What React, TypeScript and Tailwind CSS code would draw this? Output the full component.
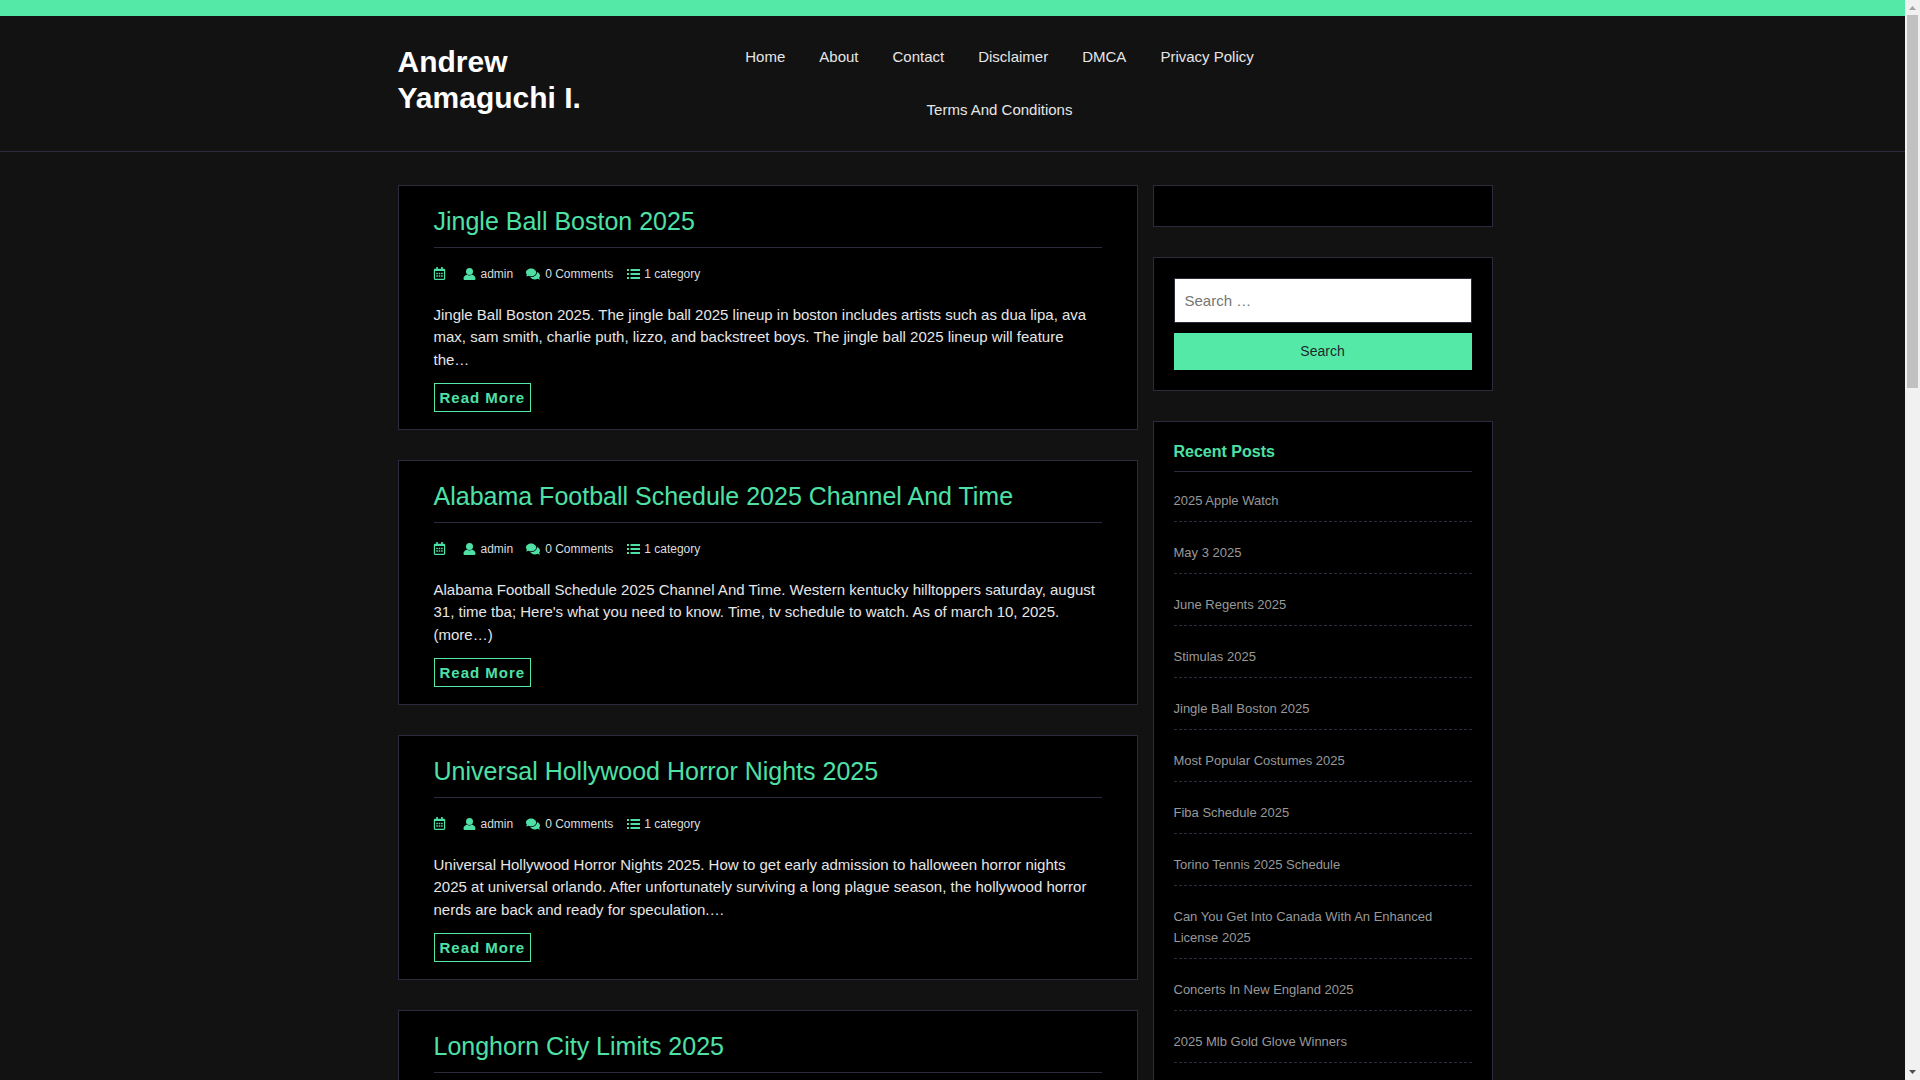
import React from "react";
import { FaRegCalendarAlt, FaComments } from "react-icons/fa";

const navItems = ["Home", "About", "Contact", "Disclaimer", "DMCA", "Privacy Policy", "Terms And Conditions"];

const posts = [
  {
    title: "Jingle Ball Boston 2025",
    excerpt:
      "Jingle Ball Boston 2025. The jingle ball 2025 lineup in boston includes artists such as dua lipa, ava max, sam smith, charlie puth, lizzo, and backstreet boys. The jingle ball 2025 lineup will feature the…",
  },
  {
    title: "Alabama Football Schedule 2025 Channel And Time",
    excerpt:
      "Alabama Football Schedule 2025 Channel And Time. Western kentucky hilltoppers saturday, august 31, time tba; Here's what you need to know. Time, tv schedule to watch. As of march 10, 2025. (more…)",
  },
  {
    title: "Universal Hollywood Horror Nights 2025",
    excerpt:
      "Universal Hollywood Horror Nights 2025. How to get early admission to halloween horror nights 2025 at universal orlando. After unfortunately surviving a long plague season, the hollywood horror nerds are back and ready for speculation.…",
  },
  { title: "Longhorn City Limits 2025", excerpt: "" },
];

const recentPosts = [
  "2025 Apple Watch",
  "May 3 2025",
  "June Regents 2025",
  "Stimulas 2025",
  "Jingle Ball Boston 2025",
  "Most Popular Costumes 2025",
  "Fiba Schedule 2025",
  "Torino Tennis 2025 Schedule",
  "Can You Get Into Canada With An Enhanced License 2025",
  "Concerts In New England 2025",
  "2025 Mlb Gold Glove Winners",
];

function UserIcon() {
  return (
    <svg viewBox="0 0 13 12" className="mr-[5px] h-[12px] w-[13px] fill-[#4fe0a6]">
      <circle cx="6.5" cy="3.5" r="3.5" />
      <path d="M0.5 10.5C0.5 8.4 2.4 7 4.2 6.8 5.5 7.6 7.5 7.6 8.8 6.8 10.6 7 12.5 8.4 12.5 10.5 12.5 11.5 11.8 12 11 12H2C1.2 12 0.5 11.5 0.5 10.5Z" />
    </svg>
  );
}

function ListIcon() {
  return (
    <svg viewBox="0 0 13 10" className="mr-[4px] h-[10px] w-[13px] fill-[#4fe0a6]">
      <path d="M0 0H2V2H0ZM3.5 0H13V2H3.5ZM0 4H2V6H0ZM3.5 4H13V6H3.5ZM0 8H2V10H0ZM3.5 8H13V10H3.5Z" />
    </svg>
  );
}

function PostCard({ post }: { post: (typeof posts)[number] }) {
  return (
    <article className="mb-[30.5px] border border-[#2b2b3d] bg-black px-[35px] pt-[17px] pb-[17px]">
      <h2 className="border-b border-[#2b2b3d] pb-[6px] text-[25px] leading-[37.5px] font-normal text-[#4fe0a6]">
        {post.title}
      </h2>
      {post.excerpt && (
        <>
          <div className="mt-[16px] flex h-[20px] items-center text-[12px] text-[#dddddd]">
            <FaRegCalendarAlt className="mr-[17px] -ml-px text-[13px] text-[#4fe0a6]" />
            <UserIcon />
            <span className="mr-[13px]">admin</span>
            <FaComments className="mr-[5px] text-[14px] text-[#4fe0a6]" />
            <span className="mr-[14px]">0 Comments</span>
            <ListIcon />
            <span>1 category</span>
          </div>
          <p className="mt-[20px] text-[15px] leading-[22.5px] text-[#e6e6e6]">{post.excerpt}</p>
          <a className="mt-[11.5px] block w-fit border border-[#55e9a8] px-[5px] text-[15px] leading-[27px] font-bold tracking-[1px] text-[#4fe0a6]">
            Read More
          </a>
        </>
      )}
    </article>
  );
}

function Scrollbar() {
  return (
    <div className="flex h-full w-[15px] shrink-0 flex-col items-center bg-[#f1f1f1]">
      <svg viewBox="0 0 7 4" className="mt-[6px] mb-[5px] h-[4px] w-[7px] fill-[#a3a3a3]">
        <path d="M3.5 0L7 4H0Z" />
      </svg>
      <div className="h-[373px] w-[11px] bg-[#c1c1c1]" />
      <svg viewBox="0 0 7 4" className="mt-auto mb-[6px] h-[4px] w-[7px] fill-[#505050]">
        <path d="M0 0H7L3.5 4Z" />
      </svg>
    </div>
  );
}

export default function App() {
  return (
    <div className="flex h-screen bg-[#121212] font-['Liberation_Sans',Arial,sans-serif]">
      <div className="h-full w-[1905px] shrink-0 overflow-hidden">
        <div className="h-4 bg-[#55e9a8]" />

        <header className="border-b border-[#2b2b3d]">
          <div className="mx-auto flex h-[135px] w-[1140px] pr-[30px] pl-[15px]">
            <div className="w-[262px] pt-[28px] text-[30px] leading-[36px] font-bold text-white">
              Andrew Yamaguchi I.
            </div>
            <nav className="flex w-[680px] flex-wrap content-start justify-center pt-[14px]">
              {navItems.map((item) => (
                <a key={item} className="h-[53px] px-[17px] text-[15px] leading-[53px] text-[#e6e6e6]">
                  {item}
                </a>
              ))}
            </nav>
          </div>
        </header>

        <div className="mx-auto flex w-[1140px] items-start gap-[15px] pt-[33px] pr-[30px] pl-[15px]">
          <main className="w-[740px] shrink-0">
            {posts.map((post) => (
              <PostCard key={post.title} post={post} />
            ))}
          </main>

          <aside className="w-[340px] shrink-0">
            <div className="mb-[30px] h-[42px] border border-[#2b2b3d] bg-black" />

            <div className="mb-[30px] border border-[#2b2b3d] bg-black p-5">
              <input
                placeholder="Search …"
                className="block h-[45px] w-full border border-[#2b2b3d] bg-white px-[10px] pb-px text-[15px] text-black outline-none placeholder:text-[#757575]"
              />
              <button className="mt-[10px] block h-[37px] w-full bg-[#55e9a8] text-[14px] text-[#1f2a2a]">Search</button>
            </div>

            <div className="border border-[#2b2b3d] bg-black px-5 pt-[19px] pb-[60px]">
              <h3 className="border-b border-[#2b2b3d] pb-[8px] text-[16px] leading-[22px] font-bold text-[#4fe0a6]">
                Recent Posts
              </h3>
              <ul>
                {recentPosts.map((title, i) => (
                  <li
                    key={title}
                    className={`border-b border-dashed border-[#2b2b3d] pb-[10px] text-[13px] leading-[21px] text-[#999999] ${i === 0 ? "pt-[18px]" : "pt-[20px]"}`}
                  >
                    {title}
                  </li>
                ))}
              </ul>
            </div>
          </aside>
        </div>
      </div>

      <Scrollbar />
    </div>
  );
}
